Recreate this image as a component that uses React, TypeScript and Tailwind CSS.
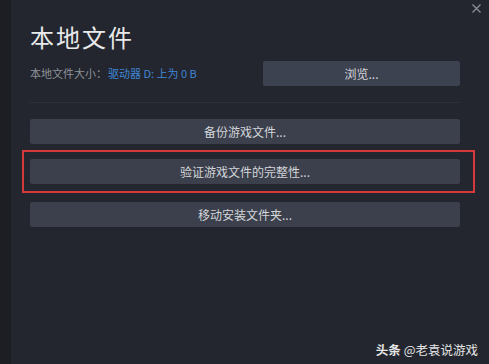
import React from 'react';

const font = { fontFamily: '"Noto Sans CJK SC", "Noto Sans", sans-serif' };

const ActionButton: React.FC<{ label: string }> = ({ label }) => (
  <button className="w-full h-[25px] bg-[#3b404c] rounded-[2px] text-[12px] text-[#d4d6da] flex items-center justify-center">
    {label}
  </button>
);

export default function App() {
  return (
    <div className="w-[489px] h-[364px] bg-[#1f2128] flex overflow-hidden" style={font}>
      <div className="w-[11px] bg-[#1c1e24]" />
      <div className="flex-1 bg-[#23262e] relative flex flex-col">
        {/* close */}
        <svg className="absolute right-[7px] top-[3px]" width="11" height="11" viewBox="0 0 11 11">
          <path d="M1.5 1.5 L9.5 9.5 M9.5 1.5 L1.5 9.5" stroke="#8a8e96" strokeWidth="1.3" />
        </svg>

        <div className="pl-[19px] pr-[29px] pt-[21px]">
          <h1 className="text-[24px] leading-[32px] text-[#e8e9eb] tracking-[2px]">本地文件</h1>
          <div className="mt-[8px] flex items-center justify-between">
            <div className="text-[11px] flex items-center gap-[1px]">
              <span className="text-[#8e929a]">本地文件大小：</span>
              <span className="text-[#3f86d8]">驱动器 D: 上为 0 B</span>
            </div>
            <button className="w-[197px] h-[25px] bg-[#3d4250] rounded-[2px] text-[12px] text-[#d4d6da] flex items-center justify-center">
              浏览...
            </button>
          </div>
          <div className="mt-[16px] h-px bg-[#2c3038]" />
        </div>

        <div className="pl-[19px] pr-[29px] mt-[16px] flex flex-col">
          <ActionButton label="备份游戏文件..." />
          <div className="mt-[6px] -ml-[8px] -mr-[15px] border-2 border-[#d6393c] pl-[6px] pr-[13px] py-[7px]">
            <ActionButton label="验证游戏文件的完整性..." />
          </div>
          <div className="mt-[9px]">
            <ActionButton label="移动安装文件夹..." />
          </div>
        </div>

        <div className="absolute right-[11px] bottom-[8px] flex items-center gap-[3px] text-[12.5px] text-[#e6e6e6] leading-none">
          <span className="font-bold">头条</span>
          <span>@老袁说游戏</span>
        </div>
      </div>
    </div>
  );
}
